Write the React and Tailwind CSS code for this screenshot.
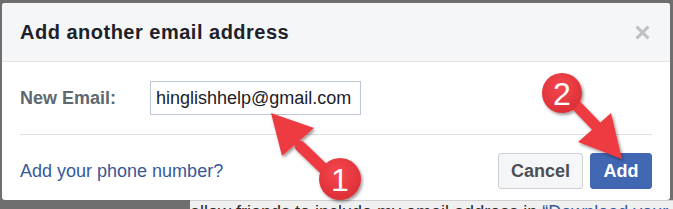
import React from 'react';

export default function App() {
  return (
    <div className="relative w-[673px] h-[209px] overflow-hidden bg-[#6f6f6f] font-['Liberation_Sans',Arial,sans-serif]">
      {/* Dialog */}
      <div className="ml-[2px] mt-[3px] w-[668px] bg-white rounded-[3px] overflow-hidden">
        {/* Header */}
        <div className="h-[59px] bg-[#f5f6f7] border-b border-[#e5e5e5] flex items-center justify-between pl-[18px] pr-[20px]">
          <h2 className="text-[20px] font-bold tracking-[0.5px] text-[#1d2129]">Add another email address</h2>
          <svg className="w-[15px] h-[15px]" viewBox="0 0 14 14" fill="none" stroke="#bec3c9" strokeWidth={3}>
            <path d="M1.5 1.5l11 11M12.5 1.5l-11 11" />
          </svg>
        </div>

        {/* Body */}
        <div className="pt-[19px] px-[18px]">
          <div className="flex items-center">
            <label className="w-[130px] text-[18px] font-bold text-[#606770]">New Email:</label>
            <div className="w-[211px] h-[34px] border border-[#bdc7d8] flex items-center px-[5px] text-[18px] text-[#1d2129]">
              hinglishhelp@gmail.com
            </div>
          </div>
          <div className="mt-[19px] border-t border-[#dddfe2]" />
        </div>

        {/* Footer */}
        <div className="pt-[18px] pb-[11px] px-[18px] flex items-center justify-between">
          <a className="text-[18px] text-[#365899]">Add your phone number?</a>
          <div className="flex items-center gap-[7px]">
            <button className="w-[85px] h-[36px] rounded-[3px] border border-[#ced0d4] bg-[#f5f6f7] text-[18px] font-bold text-[#4b4f56]">
              Cancel
            </button>
            <button className="w-[62px] h-[36px] rounded-[3px] border border-[#4267b2] bg-[#4267b2] text-[18px] font-bold text-white">
              Add
            </button>
          </div>
        </div>
      </div>

      {/* Page behind, peeking out below */}
      <div className="ml-[190px] h-[12px] bg-[#f0f0f0] border-t border-[#d0d0d0] overflow-hidden">
        <p className="mt-[1px] text-[18px] leading-[20px] whitespace-nowrap text-[#2a2a2a]">
          allow friends to include my email address in <span className="text-[#365899]">“Download your</span>
        </p>
      </div>

      {/* Annotations */}
      <svg className="absolute inset-0 w-full h-full pointer-events-none" viewBox="0 0 673 209">
        <defs>
          <filter id="sh" x="-20%" y="-20%" width="140%" height="140%">
            <feDropShadow dx="1.5" dy="2" stdDeviation="1.5" floodColor="#000" floodOpacity="0.4" />
          </filter>
          <radialGradient id="rg" cx="45%" cy="35%" r="65%">
            <stop offset="0%" stopColor="#f5474e" />
            <stop offset="100%" stopColor="#dc2f36" />
          </radialGradient>
        </defs>
        <g filter="url(#sh)" fill="#ee3b43">
          {/* arrow 1 */}
          <path d="M325 170 L300 146" stroke="#ee3b43" strokeWidth={11} strokeLinecap="round" />
          <polygon points="271,113 282,156 314,128" />
          {/* arrow 2 */}
          <path d="M575 104 L598 128" stroke="#ee3b43" strokeWidth={11} strokeLinecap="round" />
          <polygon points="622,159 578,142 611,113" />
          <circle cx="340" cy="179" r="21" fill="url(#rg)" />
          <circle cx="562" cy="93" r="20" fill="url(#rg)" />
        </g>
        <text x="340" y="191" textAnchor="middle" fill="#fff" fontSize="32" fontFamily="Liberation Sans, Arial, sans-serif">1</text>
        <text x="562" y="105" textAnchor="middle" fill="#fff" fontSize="32" fontFamily="Liberation Sans, Arial, sans-serif">2</text>
      </svg>
    </div>
  );
}
